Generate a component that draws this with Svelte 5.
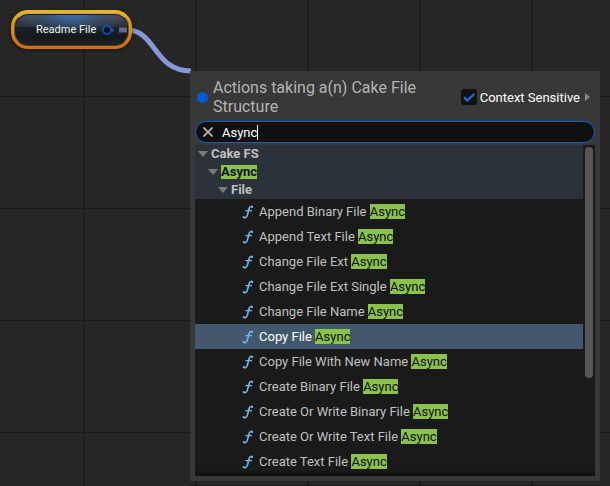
<script>
  const groups = [
    { name: 'Cake FS', depth: 0, match: false },
    { name: 'Async', depth: 1, match: true },
    { name: 'File', depth: 2, match: false },
  ];
  const actions = [
    'Append Binary File',
    'Append Text File',
    'Change File Ext',
    'Change File Ext Single',
    'Change File Name',
    'Copy File',
    'Copy File With New Name',
    'Create Binary File',
    'Create Or Write Binary File',
    'Create Or Write Text File',
    'Create Text File',
  ];
  let selected = $state('Copy File');
  let query = $state('Async');
  let contextSensitive = $state(true);
</script>

<main class="graph">
  <svg class="wire" width="80" height="60" viewBox="0 0 80 60" aria-hidden="true">
    <path d="M8 18.5H14C46 18.5 42 60 80 60" />
  </svg>

  <div class="node">
    <div class="node-body">
      <span>Readme File</span>
      <svg class="pin" width="25" height="12" viewBox="0 0 25 12" aria-hidden="true">
        <circle cx="5" cy="6" r="4" fill="#06101f" stroke="#0b4fa8" stroke-width="2" />
        <path d="M9.5 3.5 13 6 9.5 8.5Z" fill="#0b4fa8" />
        <path d="M17 3.5H25V8.5H17Z" fill="#5d6a96" />
      </svg>
    </div>
  </div>

  <section class="menu" aria-label="Graph actions">
    <header>
      <span class="type-dot"></span>
      <h1>Actions taking a(n) Cake File Structure</h1>
      <label class="context">
        <input type="checkbox" bind:checked={contextSensitive} />
        <svg class="tick" width="16" height="16" viewBox="0 0 16 16" aria-hidden="true">
          <path d="M3 8.2 6.5 11.5 13.3 4.8" />
        </svg>
        <span>Context Sensitive</span>
      </label>
      <button class="expand" aria-label="Show context options">
        <svg width="5" height="8" viewBox="0 0 5 8"><path d="M0 0 5 4 0 8Z" fill="#8a8a8a" /></svg>
      </button>
    </header>

    <div class="search">
      <button aria-label="Clear search" onclick={() => (query = '')}>
        <svg width="12" height="12" viewBox="0 0 12 12"><path d="M1.5 1.5 10.5 10.5M10.5 1.5 1.5 10.5" /></svg>
      </button>
      <div class="field">
        <input type="text" aria-label="Search actions" bind:value={query} size="5" />
        <span class="caret"></span>
      </div>
    </div>

    <div class="results">
      <div class="list">
        {#each groups as group}
          <button class="group depth-{group.depth}">
            <svg width="10" height="6" viewBox="0 0 10 6" aria-hidden="true"><path d="M0 0H10L5 6Z" fill="#77797b" /></svg>
            {#if group.match}<mark>{group.name}</mark>{:else}<span>{group.name}</span>{/if}
          </button>
        {/each}
        {#each actions as action}
          <button class="action" class:selected={selected === action} onclick={() => (selected = action)}>
            <svg width="12" height="14" viewBox="0 0 12 14" aria-hidden="true">
              <path d="M10.4 2.2C9.7 1 7.9 1.1 7.3 3L5.3 10.4C4.8 12.4 2.7 13.2 1.3 12.2" />
              <path class="bar" d="M3.4 5.6H10" />
              <circle cx="10.3" cy="2.2" r="0.9" />
              <circle cx="1.6" cy="12" r="0.9" />
            </svg>
            <span>{action} <mark>Async</mark></span>
          </button>
        {/each}
      </div>
      <div class="track"><div class="thumb"></div></div>
    </div>
  </section>
</main>

<style>
  :global(body) {
    margin: 0;
    background: #262626;
  }

  .graph {
    position: relative;
    box-sizing: border-box;
    min-height: 100vh;
    padding: 10px 11px;
    overflow: hidden;
    font: 13px/15px Roboto, 'Liberation Sans', sans-serif;
    color: #c0c0c0;
    background-color: #262626;
    background-image:
      linear-gradient(90deg, #1e1e1e 2px, transparent 2px),
      linear-gradient(#1a1a1a 1px, transparent 1px),
      linear-gradient(90deg, #2a2a2a 1px, transparent 1px),
      linear-gradient(#2a2a2a 1px, transparent 1px);
    background-size: 112px 112px, 112px 112px, 14px 14px, 14px 14px;
    background-position: 83px 0, 0 96px, 13px 0, 0 12px;
  }

  button {
    margin: 0;
    padding: 0;
    border: 0;
    background: none;
    color: inherit;
    font: inherit;
    text-align: left;
  }

  svg {
    display: block;
    flex: none;
  }

  .wire {
    position: absolute;
    left: 111px;
    top: 11px;
    overflow: visible;
  }

  .wire path {
    fill: none;
    stroke: #8797d9;
    stroke-width: 5;
  }

  .node {
    position: relative;
    width: max-content;
    padding: 3px;
    border-radius: 17px;
    background: linear-gradient(#f3b60a, #e88a08 50%, #d96c04);
    box-shadow: 0 1px 4px rgba(0, 0, 0, 0.5);
  }

  .node-body {
    display: flex;
    align-items: center;
    gap: 6px;
    box-sizing: border-box;
    height: 33px;
    padding: 0 1px 0 21px;
    border: 1px solid #5c5a55;
    border-top-color: #a9a89c;
    border-bottom-color: #3a3d40;
    border-radius: 14px;
    box-shadow: inset 0 0 0 1px #1b1e21;
    background:
      radial-gradient(ellipse 50% 70% at 50% 0, rgba(62, 112, 178, 0.95), rgba(52, 88, 135, 0.5) 55%, transparent),
      linear-gradient(#4a4f54, #2b3138 40%, #1a2026 44%, #16191c 75%, #202327);
    color: #f2f2f2;
    font-size: 11px;
  }

  .menu {
    position: absolute;
    left: 190px;
    right: 10px;
    top: 71px;
    padding: 0 5px 5px;
    background: #383838;
  }

  header {
    display: flex;
    align-items: center;
    box-sizing: border-box;
    height: 50px;
    padding: 2px 5px 0 2px;
  }

  .type-dot {
    flex: none;
    width: 11px;
    height: 11px;
    border-radius: 50%;
    background: #0059d6;
  }

  h1 {
    flex: 1;
    margin: 0 24px 0 5px;
    color: #b4b4b4;
    font-size: 16px;
    font-weight: 400;
    line-height: 19px;
  }

  .context {
    position: relative;
    display: flex;
    align-items: center;
    gap: 3px;
    color: #fff;
    white-space: nowrap;
  }

  .context input {
    appearance: none;
    width: 16px;
    height: 16px;
    margin: 0;
    border-radius: 3px;
    background: #101010;
  }

  .tick {
    position: absolute;
    left: 0;
    top: 0;
    fill: none;
    stroke: #0b74ea;
    stroke-width: 2.2;
    pointer-events: none;
  }

  .context input:not(:checked) + .tick {
    display: none;
  }

  .expand {
    margin-left: 5px;
  }

  .search {
    display: flex;
    align-items: center;
    gap: 8px;
    box-sizing: border-box;
    height: 22px;
    padding: 0 6px;
    border: 1px solid #0b64c4;
    border-radius: 11px;
    background: #0f0f0f;
    color: #fff;
  }

  .search svg {
    fill: none;
    stroke: #c8c8c8;
    stroke-width: 1.7;
  }

  .field {
    display: flex;
    flex: 1;
    align-items: center;
  }

  .field input {
    field-sizing: content;
    padding: 0;
    border: 0;
    outline: 0;
    background: none;
    color: inherit;
    font: inherit;
  }

  .caret {
    width: 1px;
    height: 15px;
    background: #fff;
  }

  .results {
    position: relative;
    display: flex;
    margin-top: 2px;
    padding-bottom: 2px;
    background: #1a1a1a;
  }

  .results::after {
    content: '';
    position: absolute;
    inset: auto 0 0;
    height: 6px;
    background: linear-gradient(transparent, rgba(0, 0, 0, 0.5));
  }

  .list {
    flex: 1;
    min-width: 0;
  }

  .group,
  .action {
    display: flex;
    align-items: center;
    width: 100%;
  }

  .group {
    gap: 3px;
    height: 18px;
    background: #2b323a;
    font-weight: 700;
    line-height: 14px;
  }

  .depth-0 {
    padding-left: 3px;
  }

  .depth-1 {
    padding-left: 13px;
  }

  .depth-2 {
    padding-left: 23px;
  }

  .action {
    gap: 5px;
    height: 25px;
    padding-left: 47px;
    white-space: nowrap;
  }

  .action svg {
    fill: none;
    stroke: #6db9ec;
    stroke-width: 1.6;
  }

  .action circle {
    fill: #6db9ec;
    stroke: none;
  }

  .action .bar {
    stroke-width: 1.3;
  }

  .selected {
    background: #42586f;
    color: #fff;
  }

  mark {
    background: #8bc24a;
    color: #101010;
  }

  .track {
    flex: none;
    width: 8px;
    padding: 2px;
  }

  .thumb {
    height: 71%;
    border-radius: 4px;
    background: #575757;
  }
</style>
